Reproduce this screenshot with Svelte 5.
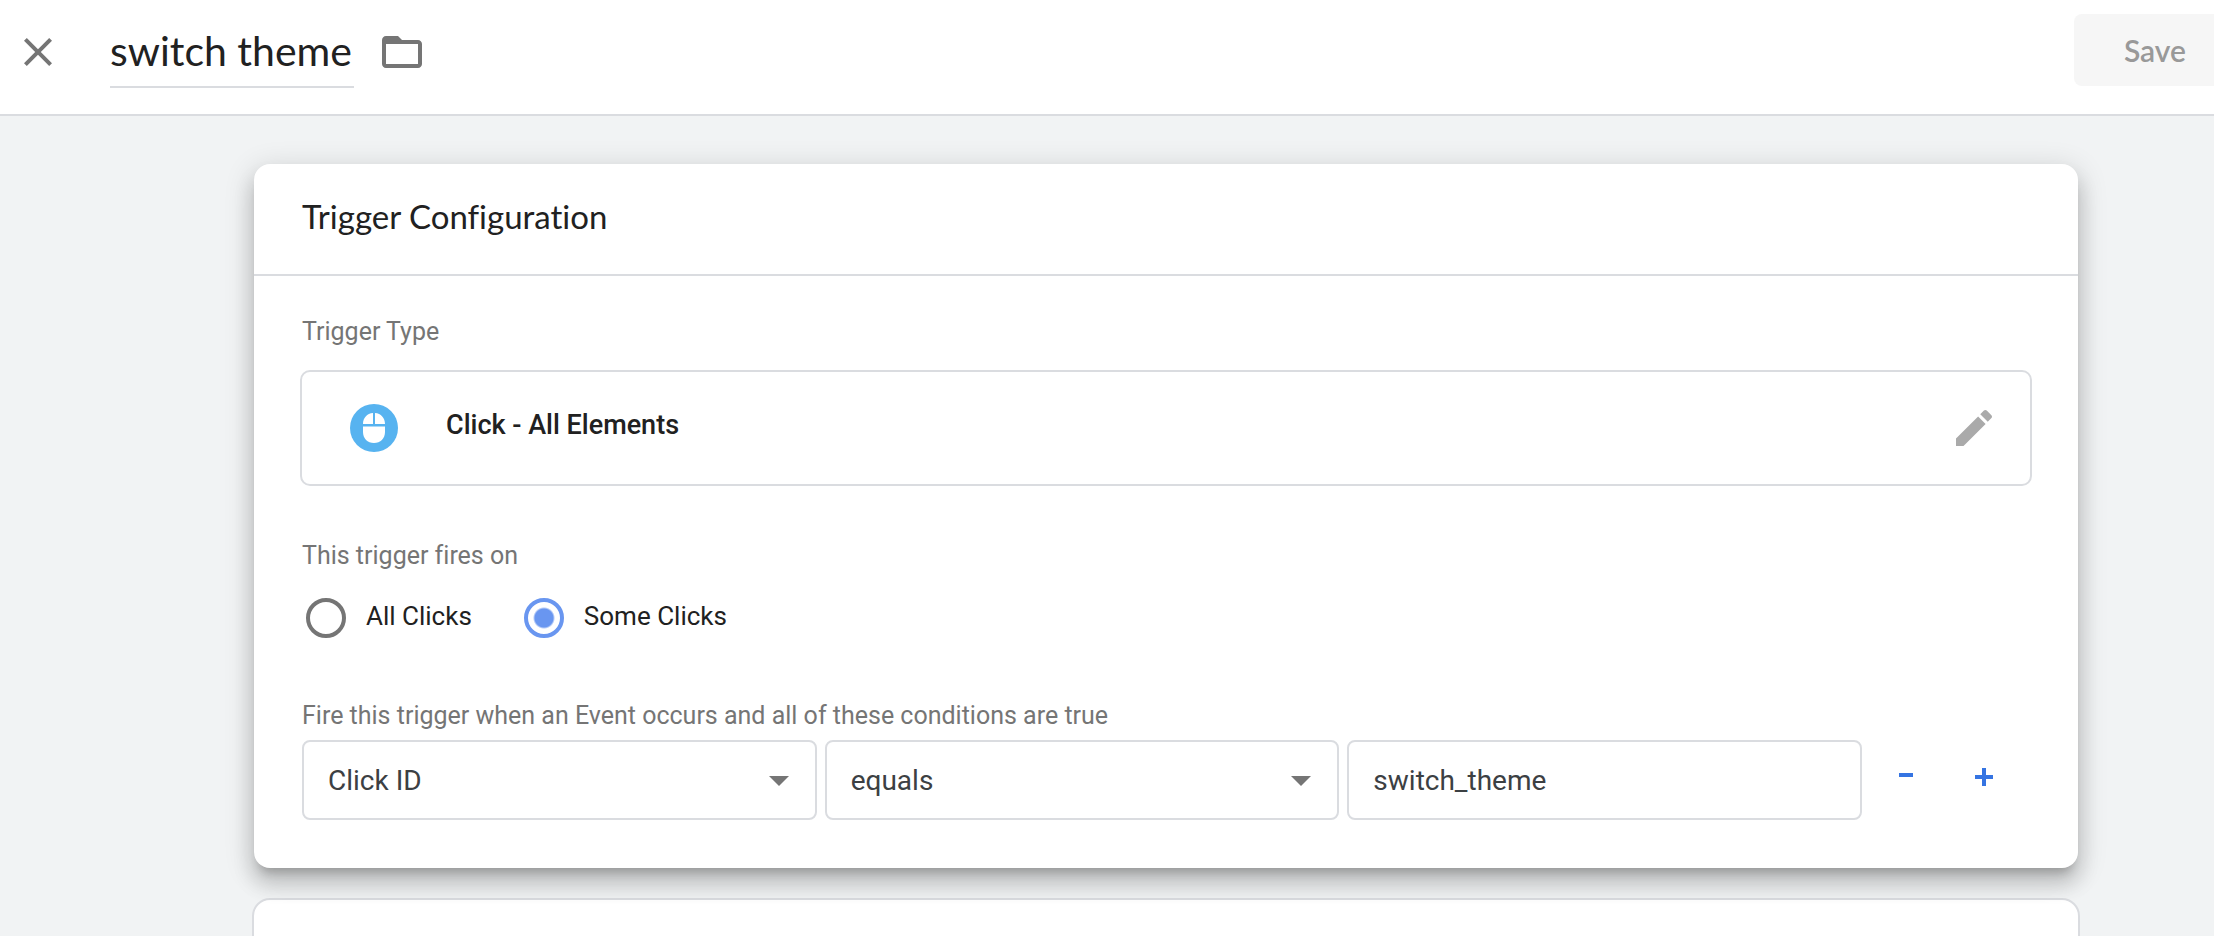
<script>
  let name = $state('switch theme');
  let fires = $state('some');
  let variable = $state('Click ID');
  let operator = $state('equals');
  let value = $state('switch_theme');
</script>

<header class="topbar">
  <button class="icon-button" aria-label="Close">
    <svg viewBox="0 0 24 24"><path d="M19 6.41L17.59 5 12 10.59 6.41 5 5 6.41 10.59 12 5 17.59 6.41 19 12 13.41 17.59 19 19 17.59 13.41 12z" /></svg>
  </button>
  <input class="name" aria-label="Trigger name" bind:value={name} />
  <button class="icon-button" aria-label="Folder">
    <svg viewBox="0 0 24 24"><path d="M20 6h-8l-2-2H4c-1.1 0-1.99.9-1.99 2L2 18c0 1.1.9 2 2 2h16c1.1 0 2-.9 2-2V8c0-1.1-.9-2-2-2zm0 12H4V8h16v10z" /></svg>
  </button>
  <button class="save" disabled>Save</button>
</header>

<main>
  <section class="card">
    <h1>Trigger Configuration</h1>
    <div class="body">
      <h2>Trigger Type</h2>
      <button class="type">
        <svg class="mouse" viewBox="0 0 48 48">
          <circle cx="24" cy="24" r="24" fill="#57b3f0" />
          <path fill="#fff" d="M23 9.1V20H13C13 14 17 9.6 23 9.1zM25 9.1V20H35C35 14 31 9.6 25 9.1zM13 22.5H35V28C35 34.5 30.500 39 24 39S13 34.500 13 28z" />
        </svg>
        <span>Click - All Elements</span>
        <svg viewBox="0 0 24 24" fill="#aaa"><path d="M3 17.25V21h3.75L17.81 9.94l-3.75-3.75L3 17.25zM20.71 7.04c.39-.39.39-1.02 0-1.41l-2.34-2.34c-.39-.39-1.02-.39-1.41 0l-1.83 1.83 3.75 3.75 1.83-1.83z" /></svg>
      </button>

      <fieldset class="fires">
        <legend>This trigger fires on</legend>
        <div class="options">
          <label><input type="radio" name="fires" value="all" bind:group={fires} /><span>All Clicks</span></label>
          <label><input type="radio" name="fires" value="some" bind:group={fires} /><span>Some Clicks</span></label>
        </div>
      </fieldset>

      <fieldset class="conditions">
        <legend>Fire this trigger when an Event occurs and all of these conditions are true</legend>
        <div class="row">
          <div class="fields">
            <div class="select">
              <select aria-label="Variable" bind:value={variable}><option>Click ID</option></select>
              <svg viewBox="0 0 20 10"><path d="M0 0h20L10 10z" /></svg>
            </div>
            <div class="select">
              <select aria-label="Operator" bind:value={operator}><option>equals</option></select>
              <svg viewBox="0 0 20 10"><path d="M0 0h20L10 10z" /></svg>
            </div>
            <input aria-label="Value" bind:value />
          </div>
          <div class="actions">
            <button aria-label="Remove condition"><svg viewBox="0 0 24 24"><path d="M5 8h14v4H5z" /></svg></button>
            <button aria-label="Add condition"><svg viewBox="0 0 24 24"><path d="M10 3h4v7h7v4h-7v7h-4v-7H3v-4h7z" /></svg></button>
          </div>
        </div>
      </fieldset>
    </div>
  </section>
  <section class="next" aria-label="References"></section>
</main>

<style>
  :global(body) {
    background: #f1f3f4;
    color: #212121;
    font-family: Roboto, sans-serif;
  }
  :global(html) {
    overflow: hidden;
  }
  * {
    box-sizing: border-box;
  }
  button,
  input,
  select {
    font: inherit;
    color: inherit;
    margin: 0;
    padding: 0;
    border: 0;
    background: none;
  }
  svg {
    display: block;
  }
  .topbar {
    display: flex;
    align-items: flex-start;
    height: 116px;
    padding: 14px 0 0 14px;
    background: #fff;
    border-bottom: 2px solid #dadce0;
  }
  .icon-button {
    margin-top: 14px;
  }
  .icon-button svg {
    width: 48px;
    height: 48px;
    fill: #757575;
  }
  .name {
    width: 244px;
    height: 74px;
    margin: 0 24px 0 48px;
    border-bottom: 2px solid #dadce0;
    font-family: Lato, sans-serif;
    font-size: 41px;
  }
  .save {
    height: 72px;
    margin-left: auto;
    padding: 0 28px 0 50px;
    border-radius: 8px 0 0 8px;
    background: #f6f6f6;
    color: #999;
    font-family: Lato, sans-serif;
    font-size: 30px;
    font-weight: 600;
  }
  main {
    padding: 48px 136px 0 254px;
  }
  .card {
    position: relative;
    border-radius: 16px;
    background: #fff;
    box-shadow:
      0 10px 10px -6px rgba(0, 0, 0, 0.2),
      0 16px 20px 2px rgba(0, 0, 0, 0.14),
      0 6px 28px 4px rgba(0, 0, 0, 0.12);
  }
  h1 {
    margin: 0;
    padding: 0 48px 6px;
    border-bottom: 2px solid #dadce0;
    font-family: Lato, sans-serif;
    font-size: 33px;
    font-variant-ligatures: none;
    font-weight: 400;
    line-height: 104px;
  }
  .body {
    padding: 40px 46px 48px;
  }
  h2,
  legend {
    margin: 0;
    padding: 0 2px;
    color: #757575;
    font-size: 25px;
    font-variant-ligatures: none;
    font-weight: 400;
    line-height: 32px;
  }
  .type {
    display: flex;
    align-items: center;
    width: 100%;
    height: 116px;
    margin-top: 22px;
    padding: 0 32px 0 48px;
    border: 2px solid #dadce0;
    border-radius: 10px;
    font-size: 27px;
    font-weight: 500;
    text-align: left;
  }
  .type svg {
    width: 48px;
    height: 48px;
  }
  .type span {
    flex: 1;
    padding: 0 48px 6px;
  }
  fieldset {
    min-width: 0;
    margin: 0;
    padding: 0;
    border: 0;
  }
  .fires {
    margin-top: 54px;
  }
  .options {
    display: flex;
    gap: 52px;
    padding: 26px 6px 0;
  }
  .options label {
    display: flex;
    align-items: center;
    gap: 20px;
    height: 40px;
    font-size: 26px;
  }
  .options span {
    padding-bottom: 4px;
  }
  .options input {
    appearance: none;
    width: 40px;
    height: 40px;
    border: 4px solid #757575;
    border-radius: 50%;
  }
  .options input:checked {
    border-color: #6996f0;
    background: radial-gradient(circle, #6996f0 9px, transparent 11px);
  }
  .conditions {
    margin-top: 62px;
  }
  .row {
    display: flex;
    padding: 8px 0 0 2px;
  }
  .fields {
    display: grid;
    grid-template-columns: repeat(3, 1fr);
    gap: 8px;
    flex: 1;
    color: #3c4043;
    font-size: 28px;
  }
  .fields select,
  .fields input {
    appearance: none;
    width: 100%;
    height: 80px;
    padding: 0 24px;
    border: 2px solid #dadce0;
    border-radius: 8px;
    background: #fff;
  }
  .select {
    position: relative;
  }
  .select svg {
    position: absolute;
    top: 36px;
    right: 28px;
    width: 20px;
    height: 10px;
    fill: #757575;
    pointer-events: none;
  }
  .actions {
    display: flex;
    align-items: center;
    padding: 0 9px 0 5px;
  }
  .actions button {
    display: grid;
    place-items: center;
    width: 78px;
    height: 74px;
  }
  .actions svg {
    width: 24px;
    height: 24px;
    margin-bottom: 6px;
    fill: #3574e2;
  }
  .next {
    height: 160px;
    margin: 30px -2px 0;
    border: 2px solid #dadce0;
    border-radius: 18px;
    background: #fff;
  }
</style>
